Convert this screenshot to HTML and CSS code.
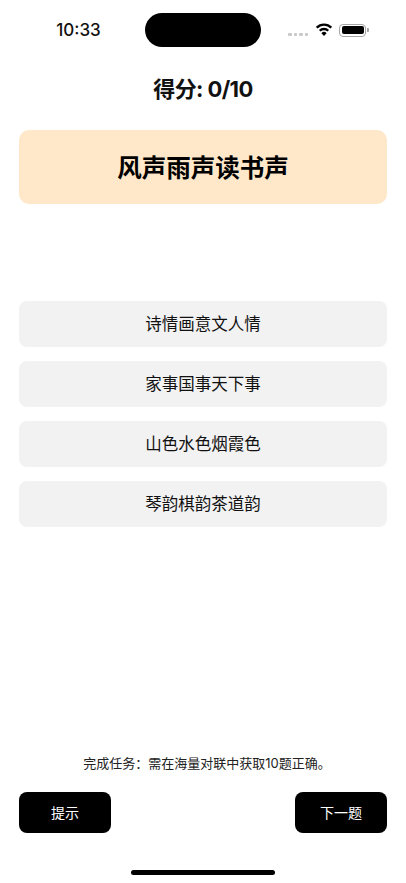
FILE: index.html
```html
<!DOCTYPE html>
<html lang="zh-CN">
<head>
    <meta charset="UTF-8">
    <meta name="viewport" content="width=device-width, initial-scale=1.0">
    <title>对联</title>
    <link rel="stylesheet" href="styles.css">
</head>
<body>
    <div class="screen">
        <div class="status_bar">
            <div class="time">10:33</div>
            <div class="island"></div>
            <div class="status_icons">
                <div class="signal"><i></i><i></i><i></i><i></i></div>
                <svg class="wifi" width="18" height="13" viewBox="0 0 18 13">
                    <path d="M1.7 4.7A10.3 10.3 0 0 1 16.3 4.7" fill="none" stroke="#000" stroke-width="2.4"/>
                    <path d="M4.76 7.76A6 6 0 0 1 13.24 7.76" fill="none" stroke="#000" stroke-width="2.4"/>
                    <path d="M9 13L6.4 10.2A3.6 3.6 0 0 1 11.6 10.2Z" fill="#000"/>
                </svg>
                <div class="battery"><div class="battery_level"></div></div>
                <div class="battery_cap"></div>
            </div>
        </div>

        <div class="score">得分: 0/10</div>
        <div class="question">风声雨声读书声</div>

        <ul class="options">
            <li>诗情画意文人情</li>
            <li>家事国事天下事</li>
            <li>山色水色烟霞色</li>
            <li>琴韵棋韵茶道韵</li>
        </ul>

        <div class="task">完成任务：需在海量对联中获取10题正确。</div>
        <div class="actions">
            <a class="btn">提示</a>
            <a class="btn">下一题</a>
        </div>
        <div class="home_bar"></div>
    </div>
</body>
</html>
```

FILE: styles.css
```css
* {margin: 0; padding: 0; box-sizing: border-box;}
li {list-style: none;}
html, body {height: 100%; background: #fff;}
body {font-family: "Inter", "Noto Sans CJK SC", sans-serif; color: #000;}

.screen {display: flex; flex-direction: column; height: 883px; padding: 0 19px;}

.status_bar {display: grid; grid-template-columns: 1fr 116px 1fr; align-items: center; height: 34px; margin: 13px -19px 0;}
.time {font-size: 17px; font-weight: 500; text-align: center; padding-left: 12px; color: #111;}
.island {height: 34px; background: #000; border-radius: 17px;}
.status_icons {display: flex; align-items: center; padding-left: 27px;}
.signal {display: flex; gap: 2px; margin-right: 7px; margin-top: 9px;}
.signal i {width: 3.5px; height: 3.5px; background: #c9c9c9; border-radius: 1px;}
.wifi {margin-right: 6px; margin-top: -1px;}
.battery {width: 27px; height: 13px; padding: 1.5px; border: 1px solid #a5a5a5; border-radius: 4px;}
.battery_level {height: 100%; background: #000; border-radius: 2px;}
.battery_cap {width: 1.5px; height: 4px; margin-left: 1px; background: #a5a5a5; border-radius: 0 1px 1px 0;}

.score {margin-top: 28px; height: 30px; line-height: 29px; font-size: 22px; font-weight: bold; letter-spacing: -0.6px; text-align: center; color: #111;}

.question {margin-top: 25px; height: 74px; line-height: 76px; font-size: 24.5px; font-weight: bold; text-align: center; background: #fee8c9; border-radius: 10px;}

.options {display: flex; flex-direction: column; gap: 14px; margin-top: 97px;}
.options li {height: 46px; line-height: 46px; font-size: 16.5px; text-align: center; background: #f2f2f2; border-radius: 8px; color: #111;}

.task {margin-top: auto; padding-left: 8px; font-size: 13px; line-height: 20px; text-align: center; color: #222;}
.actions {display: flex; justify-content: space-between; margin-top: 19px;}
.btn {width: 92px; height: 41px; line-height: 41px; font-size: 14px; text-align: center; color: #fff; background: #000; border-radius: 8px;}
.home_bar {width: 144px; height: 5px; margin: 37px auto 8px; background: #000; border-radius: 3px;}
```
